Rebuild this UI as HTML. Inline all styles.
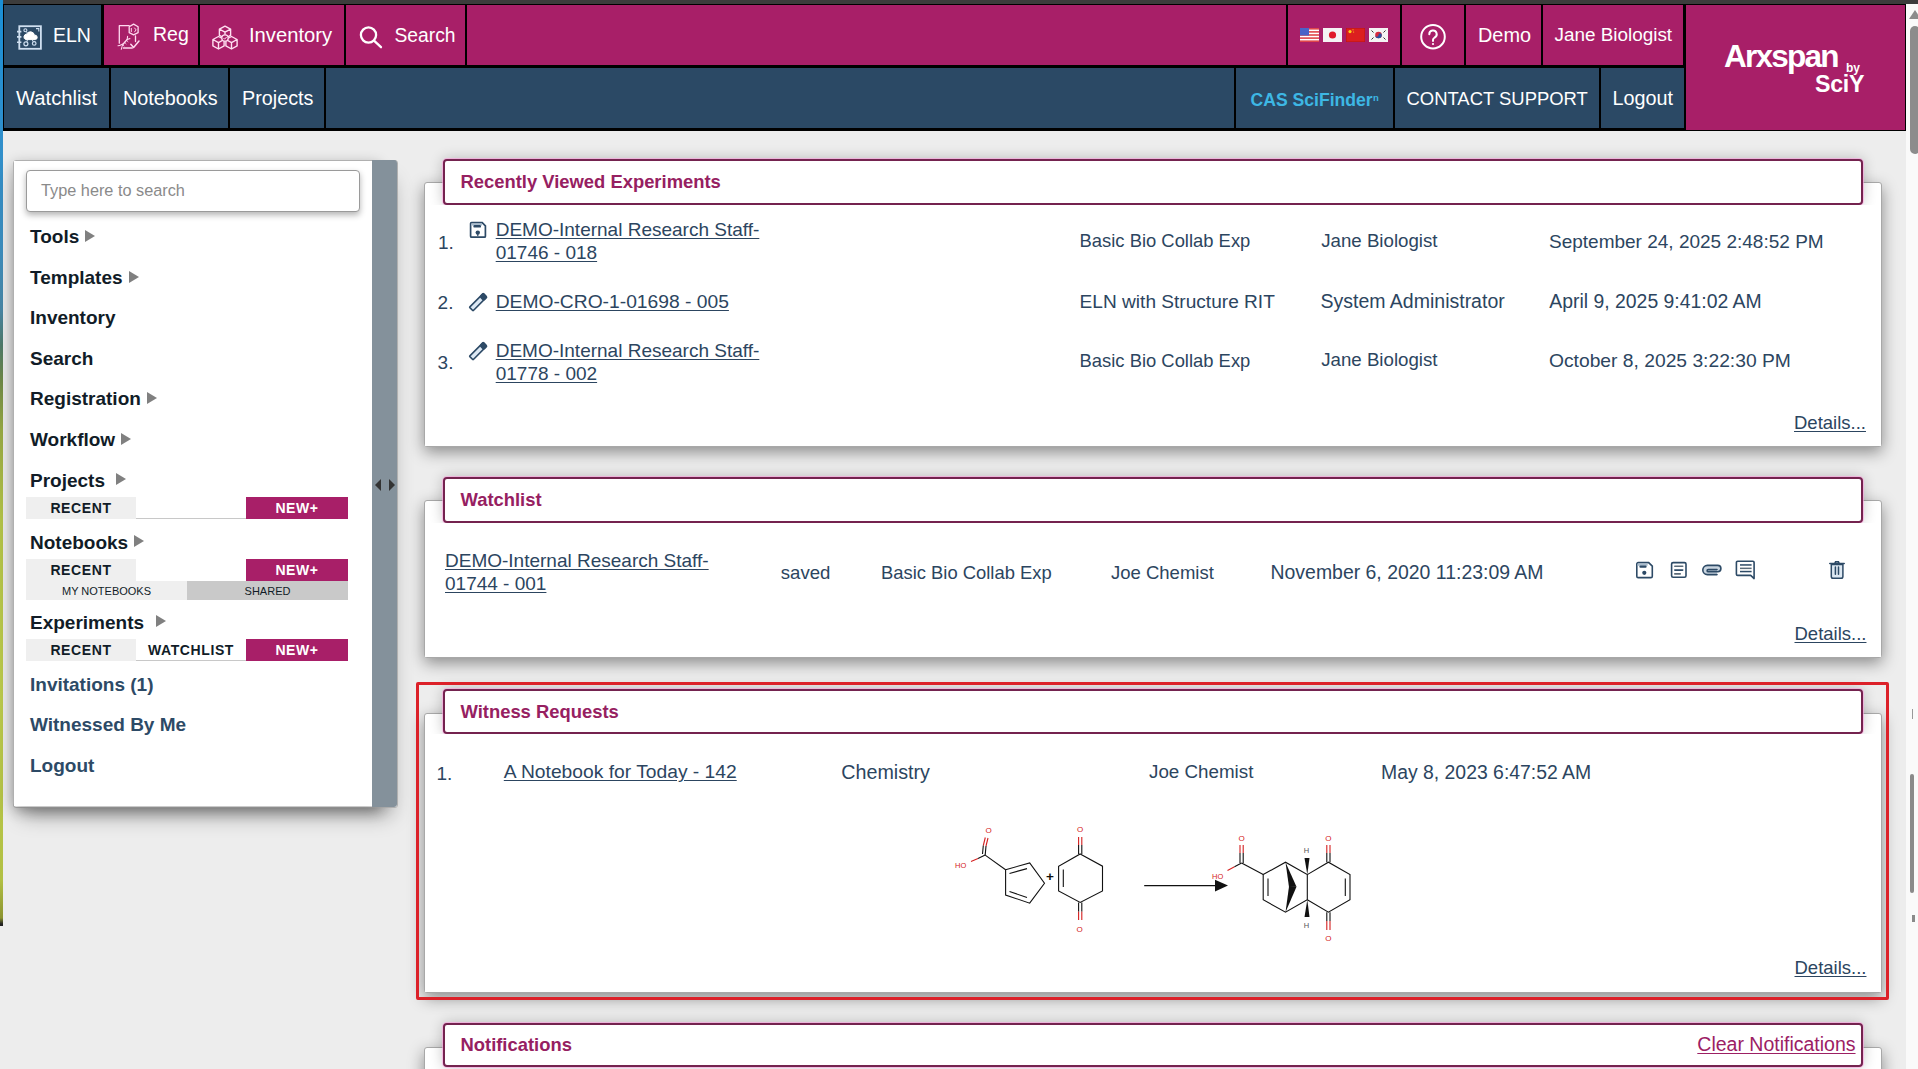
<!DOCTYPE html>
<html><head><meta charset="utf-8">
<style>
html,body{margin:0;padding:0}
body{width:1918px;height:1069px;overflow:hidden;position:relative;background:#ededed;font-family:"Liberation Sans",sans-serif}
.a{position:absolute}
.t{position:absolute;white-space:nowrap;line-height:1}
.hb{position:absolute;top:5px;height:60px;background:#a81f68}
.hb2{position:absolute;top:68px;height:60px;background:#2b4965}
.ht{position:absolute;white-space:nowrap;line-height:1;color:#fff;font-size:19px}
.si{position:absolute;white-space:nowrap;line-height:1;color:#111c27;font-size:19px;font-weight:bold;left:30px}
.arr{position:absolute;width:0;height:0;border-top:6px solid transparent;border-bottom:6px solid transparent;border-left:10px solid #808080}
.btn{position:absolute;height:22px;font-size:14px;font-weight:bold;text-align:center;line-height:22px;color:#111c27;letter-spacing:0.6px}
.panel{position:absolute;left:424px;width:1456px;background:#fff;border:1px solid #a8a8a8;border-radius:3px;box-shadow:0 5px 16px rgba(0,0,0,.42)}
.ttl{position:absolute;left:443px;width:1416px;height:42px;background:#fff;border:2px solid #74234f;border-radius:4px;box-shadow:0 0 0 1px rgba(255,160,225,.6),0 0 14px rgba(0,0,0,.24)}
.ttl span{position:absolute;left:15.5px;top:12.2px;font-size:18.4px;font-weight:bold;color:#962061;line-height:1;white-space:nowrap}
.body{position:absolute;left:425px;width:1456px;background:#fff}
.bt{position:absolute;white-space:nowrap;line-height:1;color:#2c4560;font-size:19px;margin-top:1px}
.lk{text-decoration:underline;text-underline-offset:2px}
</style></head>
<body>
<!-- left background strip -->
<div class="a" style="left:0;top:0;width:3px;height:926px;background:linear-gradient(#1a8fd6 0,#2f8fcc 130px,#3d8fbf 250px,#4a88a6 310px,#4f7a6a 345px,#6f8a48 380px,#98aa44 430px,#b4c448 520px,#bccb4c 700px,#b2c044 880px,#8c9430 918px,#222 924px)"></div>
<!-- window top bar -->
<div class="a" style="left:3px;top:0;width:1915px;height:4px;background:#3c3c3c"></div>
<!-- header black -->
<div class="a" style="left:3px;top:4px;width:1903px;height:127px;background:#000"></div>

<!-- header row 1 -->
<div class="hb" style="left:4px;width:97px;background:#2b4965"></div>
<div class="hb" style="left:104px;width:94px"></div>
<div class="hb" style="left:200px;width:144px"></div>
<div class="hb" style="left:346px;width:119px"></div>
<div class="hb" style="left:467px;width:819px"></div>
<div class="hb" style="left:1288px;width:112px"></div>
<div class="hb" style="left:1402px;width:62px"></div>
<div class="hb" style="left:1466px;width:75px"></div>
<div class="hb" style="left:1543px;width:140px"></div>
<!-- logo box -->
<div class="a" style="left:1686px;top:5px;width:219px;height:125px;background:#a81f68"></div>

<!-- header row 2 -->
<div class="hb2" style="left:4px;width:105px"></div>
<div class="hb2" style="left:111px;width:117px"></div>
<div class="hb2" style="left:230px;width:94px"></div>
<div class="hb2" style="left:326px;width:908px"></div>
<div class="hb2" style="left:1236px;width:157px"></div>
<div class="hb2" style="left:1395px;width:204px"></div>
<div class="hb2" style="left:1601px;width:83px"></div>


<!-- header icons -->
<svg class="a" style="left:12px;top:20px" width="34" height="34" viewBox="0 0 34 34" fill="none" stroke="#cfdff0">
<rect x="7.3" y="6.2" width="21.6" height="22.6" stroke-width="1.8"/>
<path d="M5 11.6h4.4M5 16.9h4.4M5 22.3h4.4" stroke-width="1.6"/>
<path d="M24 8.6h2.8v2.8" stroke-width="1.1"/>
<path d="M13.5 19.6a3 3 0 0 1 1.2-5.6a4.2 4.2 0 0 1 7.8 1.2a2.2 2.2 0 0 1 .9 4.4z" fill="#fff" stroke="#fff" stroke-width="1"/>
<circle cx="13.4" cy="10.3" r="1.5" stroke-width="1.1"/><path d="M14.3 11.5l1.4 2" stroke-width="1"/>
<circle cx="13.9" cy="23.8" r="2" stroke-width="1.2"/><path d="M15.4 20l-.6 2" stroke-width="1"/>
<circle cx="22.2" cy="23.4" r="1.8" stroke-width="1.2"/><path d="M20.3 20l1 1.7" stroke-width="1"/>
</svg>
<svg class="a" style="left:112px;top:20px" width="34" height="34" viewBox="0 0 34 34" fill="none" stroke="#ffd9f0" stroke-width="1.3" stroke-linecap="round" stroke-linejoin="round">
<path d="M7.3 23.2V5.7h9.9"/>
<path d="M11.3 28h9"/>
<path d="M23.5 15.9v5.7"/>
<path d="M21.6 4.1l4.5 2.7v5.9l-4.5 2.2l-4.4-2.2V6.8z"/>
<path d="M19.3 8.4v3.2M22.6 8l1.5 1.9l-1.5 2" stroke-width="1"/>
<path d="M18.8 24.2l2.8 3.2l5.4-6.4" stroke-width="1.5"/>
<path d="M6 25.8c3.5-.2 5.5-2.5 7.5-4.5s3.5-2.8 4.5-2.6" stroke-width="1.1"/>
<path d="M9.3 29.2c.2-3.3 2-5.5 4-7.5s2.6-3.5 2.3-5.3" stroke-width="1.1"/>
<path d="M10.2 24.3l1.7 1.7M12.4 22.1l1.7 1.7M14.4 20.2l1.6 1.6" stroke-width=".8"/>
</svg>
<svg class="a" style="left:208px;top:20px" width="34" height="34" viewBox="0 0 34 34" fill="none" stroke="#ffe0f2" stroke-width="1.4" stroke-linejoin="round">
<path d="M17 6.2l5.6 3v6.2l-5.6 3l-5.6-3V9.2z M11.4 9.2l5.6 3l5.6-3 M17 12.2v2.5"/>
<path d="M10.5 16.5l5.6 3v6.4l-5.6 3.1l-5.6-3.1v-6.4z M4.9 19.5l5.6 3.1l5.6-3.1 M10.5 22.6v6.4"/>
<path d="M23.5 16.5l5.6 3v6.4l-5.6 3.1l-5.6-3.1v-6.4z M17.9 19.5l5.6 3.1l5.6-3.1 M23.5 22.6v6.4"/>
<circle cx="17" cy="18" r="3.2" fill="#a81f68" stroke-width="1.3"/>
<path d="M15.5 18.1l1.1 1.1l2-2.2" stroke-width="1"/>
</svg>
<svg class="a" style="left:356px;top:22px" width="30" height="30" viewBox="0 0 30 30" fill="none" stroke="#fff" stroke-width="2.3" stroke-linecap="round">
<circle cx="12.5" cy="13" r="7.6"/><path d="M18 18.6l7 6.6"/>
</svg>
<!-- flags -->
<svg class="a" style="left:1300px;top:28px" width="19" height="14" viewBox="0 0 19 14">
<rect width="19" height="14" fill="#fff"/>
<g fill="#e0464a"><rect y="0" width="19" height="1.6"/><rect y="3.1" width="19" height="1.6"/><rect y="6.2" width="19" height="1.6"/><rect y="9.3" width="19" height="1.6"/><rect y="12.4" width="19" height="1.6"/></g>
<rect width="9" height="7.5" fill="#4a63c8"/>
</svg>
<svg class="a" style="left:1323px;top:28px" width="19" height="14" viewBox="0 0 19 14"><rect width="19" height="14" fill="#f4f4f4"/><circle cx="9.5" cy="7" r="3.6" fill="#e01a2a"/></svg>
<svg class="a" style="left:1346px;top:28px" width="19" height="14" viewBox="0 0 19 14"><rect width="19" height="14" fill="#dc1f1f" stroke="#a01010" stroke-width=".6"/><circle cx="4" cy="3.6" r="1.6" fill="#ffd21a"/><circle cx="7" cy="1.8" r=".6" fill="#ffd21a"/><circle cx="7.6" cy="4" r=".6" fill="#ffd21a"/></svg>
<svg class="a" style="left:1369px;top:28px" width="19" height="14" viewBox="0 0 19 14"><rect width="19" height="14" fill="#f4f4f4"/><circle cx="9.5" cy="7" r="3.3" fill="#d8283c"/><path d="M6.2 7a3.3 3.3 0 0 0 6.6 0a1.65 1.65 0 0 0-3.3 0a1.65 1.65 0 0 1-3.3 0z" fill="#2a4fa0"/><g stroke="#333" stroke-width="1"><path d="M2.5 2.5l2 2M14.5 4.5l2-2M2.5 11.5l2-2M14.5 9.5l2 2"/></g></svg>
<!-- help -->
<svg class="a" style="left:1419px;top:23px" width="28" height="28" viewBox="0 0 28 28" fill="none" stroke="#fff" stroke-width="2">
<circle cx="14" cy="13.7" r="11.8"/>
<path d="M10.3 11.2a3.7 3.7 0 1 1 5.4 3.3c-1 .6-1.7 1.2-1.7 2.6v.9" stroke-linecap="round"/>
<circle cx="14" cy="21" r="1.1" fill="#fff" stroke="none"/>
</svg>
<!-- logo -->
<span class="t" style="left:1724px;top:41.3px;font-size:31.5px;font-weight:bold;color:#fff;letter-spacing:-1.75px">Arxspan</span>
<span class="t" style="left:1846px;top:61.5px;font-size:12px;font-weight:bold;color:#fff">by</span>
<span class="t" style="left:1815px;top:72.5px;font-size:23.2px;font-weight:bold;color:#fff;letter-spacing:-.3px">SciY</span>

<!-- header texts -->
<span class="ht" style="left:53px;top:26.3px;font-size:19.5px">ELN</span>
<span class="ht" style="left:153px;top:24.6px;font-size:19.5px">Reg</span>
<span class="ht" style="left:249px;top:25px;font-size:20.2px">Inventory</span>
<span class="ht" style="left:394.5px;top:26.4px;font-size:19.3px">Search</span>
<span class="ht" style="left:1478px;top:26px;font-size:19.9px">Demo</span>
<span class="ht" style="left:1554.5px;top:26.4px;font-size:18.9px">Jane Biologist</span>
<span class="ht" style="left:16px;top:88.3px;font-size:20.2px">Watchlist</span>
<span class="ht" style="left:123px;top:88.5px;font-size:19.8px">Notebooks</span>
<span class="ht" style="left:242px;top:88.5px;font-size:19.8px">Projects</span>
<span class="ht" style="left:1250.5px;top:92px;font-size:17.6px;font-weight:bold;color:#3db7e4">CAS SciFinder</span><span class="ht" style="left:1373px;top:93px;font-size:9.5px;font-weight:bold;color:#3db7e4">n</span>
<span class="ht" style="left:1406.5px;top:89.8px;font-size:18.45px">CONTACT SUPPORT</span>
<span class="ht" style="left:1612.5px;top:88.8px;font-size:19.8px">Logout</span>

<!-- scrollbar -->
<div class="a" style="left:1906px;top:4px;width:12px;height:1065px;background:#fafafa"></div>
<div class="a" style="left:1909px;top:10px;width:0;height:0;border-left:6px solid transparent;border-right:6px solid transparent;border-bottom:9px solid #8c8c8c"></div>
<div class="a" style="left:1910px;top:26px;width:10px;height:128px;background:#8c8c8c;border-radius:5px"></div>

<div class="a" style="left:1910px;top:774px;width:4px;height:119px;background:#8a8a8a;border-radius:2px"></div>
<div class="a" style="left:1912px;top:709px;width:1px;height:10px;background:#999"></div>
<div class="a" style="left:1912px;top:915px;width:3px;height:7px;background:#8a8a8a"></div>
<!-- SIDEBAR -->
<div class="a" style="left:13px;top:160px;width:383px;height:646px;background:#fff;border:1px solid #b0b0b0;border-radius:3px;box-shadow:0 14px 20px -8px rgba(0,0,0,.42)"></div>
<div class="a" style="left:13px;top:160px;width:366px;height:646px;border-radius:3px;box-shadow:0 4px 14px rgba(0,0,0,.3)"></div>
<div class="a" style="left:14px;top:161px;width:358px;height:645px;background:#fff"></div>
<div class="a" style="left:372px;top:160px;width:25px;height:647px;background:#84919b;border-radius:0 3px 3px 0"></div>
<div class="a" style="left:375px;top:479px;width:0;height:0;border-top:6px solid transparent;border-bottom:6px solid transparent;border-right:6px solid #333"></div>
<div class="a" style="left:389px;top:479px;width:0;height:0;border-top:6px solid transparent;border-bottom:6px solid transparent;border-left:6px solid #333"></div>
<div class="a" style="left:26px;top:170px;width:332px;height:40px;background:#fff;border:1px solid #9a9a9a;border-radius:4px;box-shadow:0 3px 6px rgba(0,0,0,.3)"></div>
<span class="t" style="left:41px;top:182px;font-size:16.3px;color:#8a8a8a">Type here to search</span>

<span class="si" style="top:227px">Tools</span><div class="arr" style="left:85px;top:230px"></div>
<span class="si" style="top:268px">Templates</span><div class="arr" style="left:129px;top:271px"></div>
<span class="si" style="top:308px">Inventory</span>
<span class="si" style="top:348.7px">Search</span>
<span class="si" style="top:389px">Registration</span><div class="arr" style="left:147px;top:392px"></div>
<span class="si" style="top:429.5px">Workflow</span><div class="arr" style="left:121px;top:433px"></div>
<span class="si" style="top:471px">Projects</span><div class="arr" style="left:116px;top:473px"></div>
<div class="btn" style="left:26px;top:497px;width:110px;background:#efefef">RECENT</div>
<div class="a" style="left:136px;top:518px;width:110px;height:1px;background:#c8c8c8"></div>
<div class="btn" style="left:246px;top:497px;width:102px;background:#a81f68;color:#fff">NEW+</div>
<span class="si" style="top:532.8px">Notebooks</span><div class="arr" style="left:134px;top:535px"></div>
<div class="btn" style="left:26px;top:559px;width:110px;background:#efefef">RECENT</div>
<div class="btn" style="left:246px;top:559px;width:102px;background:#a81f68;color:#fff">NEW+</div>
<div class="btn" style="left:26px;top:581px;width:161px;height:19px;line-height:19px;font-size:11px;line-height:20.5px;font-weight:normal;background:#efefef;letter-spacing:0">MY NOTEBOOKS</div>
<div class="btn" style="left:187px;top:581px;width:161px;height:19px;line-height:19px;font-size:11px;line-height:20.5px;font-weight:normal;background:#c9c9c9;letter-spacing:0">SHARED</div>
<span class="si" style="top:613px">Experiments</span><div class="arr" style="left:156px;top:615px"></div>
<div class="btn" style="left:26px;top:639px;width:110px;background:#efefef">RECENT</div>
<div class="btn" style="left:136px;top:639px;width:110px;border-bottom:1px solid #c8c8c8;height:21px">WATCHLIST</div>
<div class="btn" style="left:246px;top:639px;width:102px;background:#a81f68;color:#fff">NEW+</div>
<span class="si" style="top:675.3px;color:#2d4a66">Invitations (1)</span>
<span class="si" style="top:715px;color:#2d4a66">Witnessed By Me</span>
<span class="si" style="top:755.8px;color:#2d4a66">Logout</span>

<!-- MAIN -->

<!-- PANEL 1 : Recently viewed -->
<div class="panel" style="top:182px;height:263px"></div>
<div class="ttl" style="top:159px"><span>Recently Viewed Experiments</span></div>
<div class="body" style="top:205px;height:241px"></div>

<span class="bt" style="left:438px;top:232px">1.</span>
<svg class="a" style="left:464px;top:216px" width="28" height="28" viewBox="0 0 28 28"><path d="M7.6 6.6h10.6l3.2 3.2v10.4a1 1 0 0 1-1 1H7.6a1 1 0 0 1-1-1V7.6a1 1 0 0 1 1-1z" fill="#fff" stroke="#2d4a66" stroke-width="1.7"/><rect x="7.4" y="7.4" width="10.6" height="2.2" fill="#a9bccd"/><rect x="9.4" y="9" width="7.6" height="2.6" rx="1.2" fill="#2d4a66"/><circle cx="13.8" cy="16.6" r="2.2" fill="#2d4a66"/><rect x="13.2" y="17.5" width="1.2" height="2.6" fill="#2d4a66"/></svg>
<span class="bt lk" style="left:495.7px;top:218.6px">DEMO-Internal Research Staff-</span>
<span class="bt lk" style="left:495.7px;top:241.6px">01746 - 018</span>
<span class="bt" style="left:1079.6px;top:231px;font-size:18.4px">Basic Bio Collab Exp</span>
<span class="bt" style="left:1321.2px;top:230.8px;font-size:18.7px">Jane Biologist</span>
<span class="bt" style="left:1549px;top:230.8px">September 24, 2025 2:48:52 PM</span>

<span class="bt" style="left:437.6px;top:291.6px">2.</span>
<svg class="a" style="left:464px;top:288px" width="28" height="28" viewBox="0 0 28 28"><g transform="rotate(-45 14.2 14.1)"><rect x="4.4" y="11.6" width="19.4" height="5" rx="0.5" fill="#dce8f4" stroke="#2d4a66" stroke-width="1.6"/><rect x="18.6" y="10.8" width="6" height="6.6" rx="2" fill="#2d4a66"/></g></svg>
<span class="bt lk" style="left:495.7px;top:291.2px;font-size:19.25px">DEMO-CRO-1-01698 - 005</span>
<span class="bt" style="left:1079.6px;top:291px;font-size:19.1px">ELN with Structure RIT</span>
<span class="bt" style="left:1320.5px;top:290.8px;font-size:19.5px">System Administrator</span>
<span class="bt" style="left:1549.3px;top:290.8px;font-size:19.4px">April 9, 2025 9:41:02 AM</span>

<span class="bt" style="left:437.6px;top:351.5px">3.</span>
<svg class="a" style="left:464px;top:337px" width="28" height="28" viewBox="0 0 28 28"><g transform="rotate(-45 14.2 14.1)"><rect x="4.4" y="11.6" width="19.4" height="5" rx="0.5" fill="#dce8f4" stroke="#2d4a66" stroke-width="1.6"/><rect x="18.6" y="10.8" width="6" height="6.6" rx="2" fill="#2d4a66"/></g></svg>
<span class="bt lk" style="left:495.7px;top:339.7px">DEMO-Internal Research Staff-</span>
<span class="bt lk" style="left:495.7px;top:362.6px">01778 - 002</span>
<span class="bt" style="left:1079.6px;top:350.5px;font-size:18.4px">Basic Bio Collab Exp</span>
<span class="bt" style="left:1321.2px;top:350.3px;font-size:18.7px">Jane Biologist</span>
<span class="bt" style="left:1549px;top:350.4px;font-size:19.25px">October 8, 2025 3:22:30 PM</span>

<span class="bt lk" style="left:1794px;top:413px;font-size:18.5px">Details...</span>

<!-- PANEL 2 : Watchlist -->
<div class="panel" style="top:500px;height:156px"></div>
<div class="ttl" style="top:477px"><span>Watchlist</span></div>
<div class="body" style="top:523px;height:134px"></div>
<span class="bt lk" style="left:445px;top:549.9px">DEMO-Internal Research Staff-</span>
<span class="bt lk" style="left:445px;top:572.8px">01744 - 001</span>
<span class="bt" style="left:780.8px;top:562.8px;font-size:18.6px">saved</span>
<span class="bt" style="left:881px;top:562.6px;font-size:18.4px">Basic Bio Collab Exp</span>
<span class="bt" style="left:1111px;top:562.6px;font-size:18.5px">Joe Chemist</span>
<span class="bt" style="left:1270.5px;top:562.4px;font-size:19.45px">November 6, 2020 11:23:09 AM</span>
<!-- icons -->
<svg class="a" style="left:1636px;top:561px" width="18" height="18" viewBox="0 0 18 18"><path d="M2.2 1.6h10.5l3.6 3.6v10a1.4 1.4 0 0 1-1.4 1.4H2.2A1.4 1.4 0 0 1 .8 15.2V3a1.4 1.4 0 0 1 1.4-1.4z" fill="#fff" stroke="#2d4a66" stroke-width="1.6"/><rect x="1.6" y="2.4" width="10" height="2.4" fill="#a9bccd"/><rect x="3.4" y="4.4" width="7.2" height="2.4" rx="1" fill="#2d4a66"/><circle cx="8.3" cy="11.8" r="2.1" fill="#2d4a66"/></svg>
<svg class="a" style="left:1670px;top:561px" width="18" height="18" viewBox="0 0 18 18"><rect x="1.6" y="1.6" width="14.4" height="14.6" rx="1.5" fill="#fff" stroke="#2d4a66" stroke-width="1.6"/><rect x="4" y="4.4" width="9.5" height="1.7" rx=".8" fill="#5a6a78"/><rect x="4" y="8.2" width="9.5" height="1.7" rx=".8" fill="#2d4a66"/><rect x="4" y="12" width="7" height="1.7" rx=".8" fill="#5a6a78"/></svg>
<svg class="a" style="left:1701px;top:563px" width="22" height="14" viewBox="0 0 22 14"><path d="M16 11.6H6.4A4.6 4.6 0 0 1 6.4 2.4h10.3a3.2 3.2 0 0 1 0 6.4H7.2a1.1 1.1 0 0 1 0-2.2h8.8" fill="#c9d5e0" stroke="#2d4a66" stroke-width="1.6" stroke-linecap="round"/></svg>
<svg class="a" style="left:1735px;top:559px" width="22" height="22" viewBox="0 0 22 22"><path d="M2.6 2.2h15.3a1.2 1.2 0 0 1 1.2 1.2v16.2l-3.4-3.2H2.6a1.2 1.2 0 0 1-1.2-1.2V3.4a1.2 1.2 0 0 1 1.2-1.2z" fill="#fff" stroke="#2d4a66" stroke-width="1.6" stroke-linejoin="round"/><rect x="5" y="5.2" width="11.6" height="1.5" fill="#2d4a66"/><rect x="5" y="8.6" width="11.6" height="1.5" fill="#5a6a78"/><rect x="5" y="11.8" width="11.6" height="1.5" fill="#2d4a66"/></svg>
<svg class="a" style="left:1828px;top:560px" width="18" height="20" viewBox="0 0 18 20"><path d="M3.3 4.4h11.6V16.4a1.8 1.8 0 0 1-1.8 1.8H5.1a1.8 1.8 0 0 1-1.8-1.8z" fill="#dde8f2" stroke="#2d4a66" stroke-width="1.5"/><path d="M1.8 3.5h14.4M6.8 3.3l.8-1.6h2.8l.8 1.6" stroke="#2d4a66" stroke-width="1.6" fill="none" stroke-linecap="round"/><path d="M7.4 7v7.2M10.5 7v7.2" stroke="#2d4a66" stroke-width="1.5" stroke-linecap="round"/></svg>
<span class="bt lk" style="left:1794.5px;top:623.7px;font-size:18.5px">Details...</span>

<!-- PANEL 3 : Witness requests -->
<div class="panel" style="top:712.5px;height:278px"></div>
<div class="ttl" style="top:689px;height:41px"><span style="top:11.6px">Witness Requests</span></div>
<div class="body" style="top:734px;height:257.5px"></div>
<span class="bt" style="left:436.5px;top:762.5px">1.</span>
<span class="bt lk" style="left:503.8px;top:761.4px;font-size:19.25px">A Notebook for Today - 142</span>
<span class="bt" style="left:841.3px;top:761.8px;font-size:19.7px">Chemistry</span>
<span class="bt" style="left:1149px;top:762.2px;font-size:18.8px">Joe Chemist</span>
<span class="bt" style="left:1381px;top:761.6px;font-size:19.4px">May 8, 2023 6:47:52 AM</span>
<svg class="a" style="left:940px;top:815px" width="430" height="135" viewBox="940 815 430 135" font-family="Liberation Sans" font-size="8">
<g stroke="#111" stroke-width="1.1" fill="none">
<!-- left molecule ring -->
<path d="M1005.6 869.7L1029.7 862.9L1044.5 883.3L1029.7 903.2L1005.6 895Z"/>
<path d="M1009.5 873.5L1027 868.6M1009.5 891.6L1027 897.4"/>
<path d="M985.2 855.1L1005.6 869.7"/>
<!-- quinone ring -->
<path d="M1080.2 854L1102.5 866.2L1102.5 891L1080.2 902.5L1058.6 891L1058.6 866.2Z"/>
<path d="M1063.3 869.5L1063.3 887"/>
<!-- arrow -->
<path d="M1144.2 885.6L1216 885.6"/>
<!-- product -->
<path d="M1263.2 874.6L1285.5 862.2L1307.3 874.6L1307.3 899.7L1285.5 912.2L1263.2 899.7Z"/><path d="M1241.6 862.9L1263.2 874.6"/>
<path d="M1268 878.5L1268 896"/>
<path d="M1307.3 874.6L1328.4 862.2L1350 874.6L1350 899.7L1328.4 912.2L1307.3 899.7"/>
<path d="M1345.3 878.5L1345.3 896"/>
</g>
<g stroke="#d42020" stroke-width="1.1" fill="none">
<path d="M971 861.5L978 858.5"/>
<path d="M986 846L988 838M983.3 845.5L985.3 837.5"/>
<path d="M1078.6 845L1078.6 837M1081.8 845L1081.8 837"/>
<path d="M1078.6 911.5L1078.6 920M1081.8 911.5L1081.8 920"/>
<path d="M1227.5 870.4L1234.5 866.7"/>
<path d="M1240 853L1240 845M1243.2 853L1243.2 845"/>
<path d="M1326.8 853L1326.8 845M1330 853L1330 845"/>
<path d="M1326.8 921L1326.8 930M1330 921L1330 930"/>
</g>
<g stroke="#111" stroke-width="1.1" fill="none">
<path d="M978 858.5L985.2 855.1"/>
<path d="M986 846L985.2 855.1M983.3 845.5L982.5 854"/>
<path d="M1078.6 845L1078.6 854M1081.8 845L1081.8 854"/>
<path d="M1078.6 902.5L1078.6 911.5M1081.8 902.5L1081.8 911.5"/>
<path d="M1234.5 866.7L1241.6 862.9"/>
<path d="M1240 853L1240 862.9M1243.2 853L1243.2 862.9"/>
<path d="M1326.8 853L1326.8 862.2M1330 853L1330 862.2"/>
<path d="M1326.8 912.2L1326.8 921M1330 912.2L1330 921"/>
</g>
<path d="M1215 879.8L1228 885.6L1215 891.4Z" fill="#111"/>
<path d="M1285.5 862.2L1296.5 886.8L1289 887Z" fill="#111"/>
<path d="M1285.5 912.2L1296.5 886.8L1289 886.6Z" fill="#111"/>
<path d="M1307.3 874.6L1304.5 858L1309.5 858Z" fill="#111"/>
<path d="M1307.3 899.7L1304.5 917L1309.5 917Z" fill="#111"/>
<g fill="#d42020">
<text x="985.5" y="833">O</text>
<text x="955" y="867.5" font-size="7.5">HO</text>
<text x="1077" y="832">O</text>
<text x="1076.5" y="932">O</text>
<text x="1238.5" y="840.5">O</text>
<text x="1212" y="878.5" font-size="7.5">HO</text>
<text x="1325.3" y="840.5">O</text>
<text x="1325.3" y="940.5">O</text>
</g>
<g fill="#555" font-size="7.5"><text x="1303.8" y="853">H</text><text x="1303.8" y="927.5">H</text></g>
<text x="1046" y="881" font-size="13.5" font-weight="bold" fill="#111">+</text>
</svg>
<span class="bt lk" style="left:1794.5px;top:958px;font-size:18.5px">Details...</span>
<!-- red outline -->
<div class="a" style="left:416px;top:682px;width:1467px;height:312px;border:3px solid #dc2129;border-radius:2px"></div>

<!-- PANEL 4 : Notifications -->
<div class="panel" style="top:1046.5px;height:60px"></div>
<div class="ttl" style="top:1023.3px;height:40px"><span style="top:11px">Notifications</span></div>
<span class="bt lk" style="left:1697.3px;top:1034.3px;color:#9c2064;font-size:19.5px">Clear Notifications</span>
</body></html>
